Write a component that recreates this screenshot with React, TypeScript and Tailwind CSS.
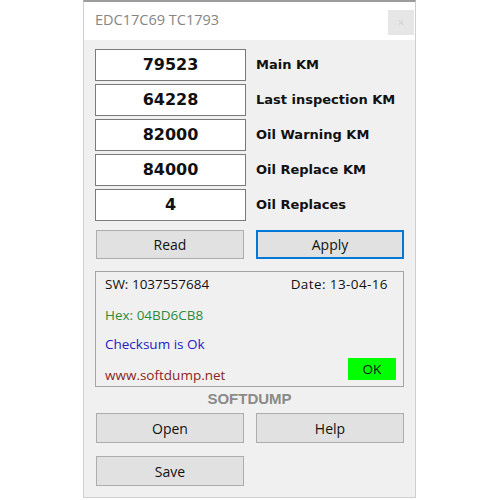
import React from "react";

type RowProps = { value: string; label: string };

const fields: RowProps[] = [
  { value: "79523", label: "Main KM" },
  { value: "64228", label: "Last inspection KM" },
  { value: "82000", label: "Oil Warning KM" },
  { value: "84000", label: "Oil Replace KM" },
  { value: "4", label: "Oil Replaces" },
];

function FieldRow({ value, label }: RowProps) {
  return (
    <div className="flex items-center gap-[10px]">
      <div className="w-[151px] h-[32px] border border-[#7a7a7a] bg-white flex items-center justify-center font-['DejaVu_Sans',sans-serif] font-bold text-[16px] text-[#111]">
        {value}
      </div>
      <span className="font-['DejaVu_Sans',sans-serif] font-bold text-[13px] text-[#111]">
        {label}
      </span>
    </div>
  );
}

function Button({
  children,
  focused,
  tall,
}: {
  children: React.ReactNode;
  focused?: boolean;
  tall?: boolean;
}) {
  return (
    <div
      className={
        "w-[148px] flex items-center justify-center bg-[#e1e1e1] text-[14px] text-[#111] " +
        (tall ? "h-[30px] " : "h-[29px] ") +
        (focused ? "border-2 border-[#0078d7]" : "border border-[#adadad]")
      }
    >
      {children}
    </div>
  );
}

export default function App() {
  return (
    <div className="w-[500px] h-[500px] bg-white flex font-['Open_Sans',sans-serif]">
      <div className="ml-[83px] w-[333px] h-[498px] flex flex-col border-x border-b border-[#cfcfcf] border-t-2 border-t-[#9d9d9d]">
        {/* title bar */}
        <div className="h-[38px] bg-white flex items-start justify-between pl-[11px] pr-[1px]">
          <span className="mt-[7px] text-[14.5px] text-[#858585]">EDC17C69 TC1793</span>
          <div className="mt-[8px] w-[26px] h-[25px] bg-[#e6e6e6] flex items-center justify-center text-[12px] text-[#d2d2d2]">
            ×
          </div>
        </div>

        {/* body */}
        <div className="flex-1 bg-[#f0f0f0] pl-[11px] pt-[9px] flex flex-col">
          <div className="flex flex-col gap-[3px]">
            {fields.map((f) => (
              <FieldRow key={f.label} value={f.value} label={f.label} />
            ))}
          </div>

          <div className="mt-[9px] pl-[1px] flex gap-[12px]">
            <Button>Read</Button>
            <Button focused>Apply</Button>
          </div>

          <div className="mt-[12px] w-[309px] h-[116px] border border-[#a5a5a5] flex flex-col pl-[9px] pr-[7px] text-[13.5px]">
            <div className="h-[24px] flex items-center justify-between pr-[8px] text-[#111]">
              <span>SW: 1037557684</span>
              <span className="tracking-[0.4px]">Date: 13-04-16</span>
            </div>
            <div className="mt-[4px] h-[30px] flex items-center text-[#2e8b3a]">Hex: 04BD6CB8</div>
            <div className="h-[28px] flex items-center text-[#2222c4]">Checksum is Ok</div>
            <div className="flex-1 flex justify-between">
              <span className="self-end mb-[1px] leading-[20px] text-[#8e1f1f]">www.softdump.net</span>
              <div className="w-[48px] h-[22px] bg-[#00ff00] flex items-center justify-center text-[#111]">
                OK
              </div>
            </div>
          </div>

          <div className="w-[309px] mt-[3px] h-[18px] flex items-center justify-center font-['Liberation_Sans',sans-serif] font-bold text-[15px] text-[#8a8a8a]">
            SOFTDUMP
          </div>

          <div className="mt-[5px] pl-[1px] flex gap-[12px]">
            <Button tall>Open</Button>
            <Button tall>Help</Button>
          </div>
          <div className="mt-[13px] pl-[1px] flex">
            <Button tall>Save</Button>
          </div>
        </div>
      </div>
    </div>
  );
}
